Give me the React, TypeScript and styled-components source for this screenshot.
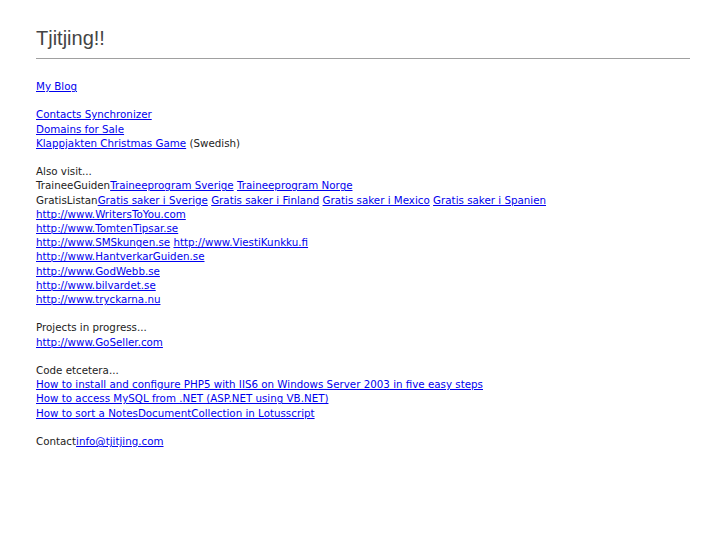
import styled, { createGlobalStyle } from 'styled-components';

const GlobalStyle = createGlobalStyle`
    html, body {
        margin: 0;
        padding: 0;
        background: #fff;
    }
`;

const Page = styled.div`
    padding: 26px 37px 36px 36px;
    font-family: 'DejaVu Sans', Verdana, sans-serif;
    font-size: 10.3px;
    line-height: 14.2px;
    color: #222;
`;

const Title = styled.h1`
    margin: 0;
    padding-bottom: 8px;
    font-family: 'Liberation Sans', Arial, sans-serif;
    font-size: 20px;
    font-weight: 400;
    line-height: 24px;
    color: #444;
    border-bottom: 1px solid #a0a0a0;
`;

const Content = styled.div`
    padding-top: 20px;
`;

const Block = styled.div`
    margin-bottom: 14.2px;
`;

const Line = styled.div`
    white-space: nowrap;
`;

const Link = styled.a`
    color: #0000ee;
    text-decoration: underline;
`;

const Note = styled.span`
    color: #222;
`;

export default function App() {
    return (
        <>
            <GlobalStyle />
            <Page>
                <Title>Tjitjing!!</Title>
                <Content>
                    <Block>
                        <Line>
                            <Link href="#">My Blog</Link>
                        </Line>
                    </Block>
                    <Block>
                        <Line>
                            <Link href="#">Contacts Synchronizer</Link>
                        </Line>
                        <Line>
                            <Link href="#">Domains for Sale</Link>
                        </Line>
                        <Line>
                            <Link href="#">Klappjakten Christmas Game</Link> <Note>(Swedish)</Note>
                        </Line>
                    </Block>
                    <Block>
                        <Line>Also visit...</Line>
                        <Line>
                            TraineeGuiden<Link href="#">Traineeprogram Sverige</Link>{' '}
                            <Link href="#">Traineeprogram Norge</Link>
                        </Line>
                        <Line>
                            GratisListan<Link href="#">Gratis saker i Sverige</Link>{' '}
                            <Link href="#">Gratis saker i Finland</Link> <Link href="#">Gratis saker i Mexico</Link>{' '}
                            <Link href="#">Gratis saker i Spanien</Link>
                        </Line>
                        <Line>
                            <Link href="#">http://www.WritersToYou.com</Link>
                        </Line>
                        <Line>
                            <Link href="#">http://www.TomtenTipsar.se</Link>
                        </Line>
                        <Line>
                            <Link href="#">http://www.SMSkungen.se</Link> <Link href="#">http://www.ViestiKunkku.fi</Link>
                        </Line>
                        <Line>
                            <Link href="#">http://www.HantverkarGuiden.se</Link>
                        </Line>
                        <Line>
                            <Link href="#">http://www.GodWebb.se</Link>
                        </Line>
                        <Line>
                            <Link href="#">http://www.bilvardet.se</Link>
                        </Line>
                        <Line>
                            <Link href="#">http://www.tryckarna.nu</Link>
                        </Line>
                    </Block>
                    <Block>
                        <Line>Projects in progress...</Line>
                        <Line>
                            <Link href="#">http://www.GoSeller.com</Link>
                        </Line>
                    </Block>
                    <Block>
                        <Line>Code etcetera...</Line>
                        <Line>
                            <Link href="#">How to install and configure PHP5 with IIS6 on Windows Server 2003 in five easy steps</Link>
                        </Line>
                        <Line>
                            <Link href="#">How to access MySQL from .NET (ASP.NET using VB.NET)</Link>
                        </Line>
                        <Line>
                            <Link href="#">How to sort a NotesDocumentCollection in Lotusscript</Link>
                        </Line>
                    </Block>
                    <Block>
                        <Line>
                            Contact<Link href="#">info@tjitjing.com</Link>
                        </Line>
                    </Block>
                </Content>
            </Page>
        </>
    );
}
